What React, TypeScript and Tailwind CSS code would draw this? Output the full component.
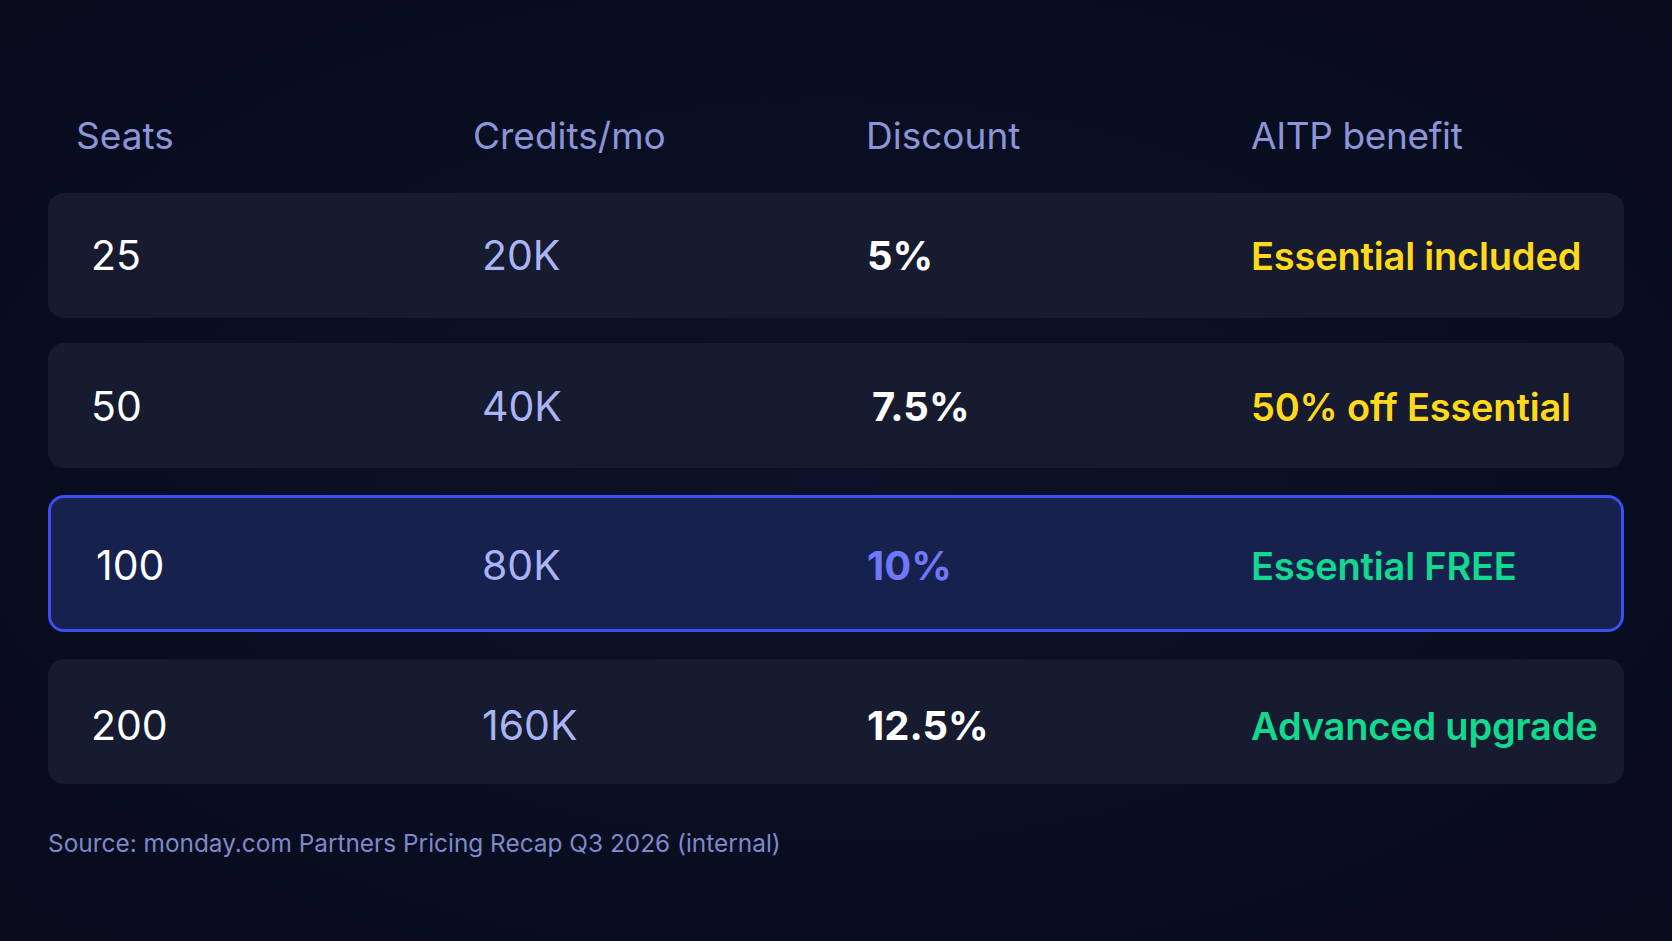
import React from "react";

type Row = {
  seats: string;
  credits: string;
  discount: string;
  discountPad?: string;
  rowPad?: string;
  benefit: string;
  benefitColor: string;
  highlight?: boolean;
};

const rows: Row[] = [
  { seats: "25", credits: "20K", discount: "5%", benefit: "Essential included", benefitColor: "text-[#ffd91a]" },
  { seats: "50", credits: "40K", discount: "7.5%", discountPad: "pl-[5px]", rowPad: "pt-[2px]", benefit: "50% off Essential", benefitColor: "text-[#ffd91a]" },
  { seats: "100", credits: "80K", discount: "10%", rowPad: "pt-[4px]", benefit: "Essential FREE", benefitColor: "text-[#12d98e]", highlight: true },
  { seats: "200", credits: "160K", discount: "12.5%", rowPad: "pt-[8px]", benefit: "Advanced upgrade", benefitColor: "text-[#12d98e]" },
];

export default function App() {
  return (
    <div
      className="w-[1672px] h-[941px] overflow-hidden bg-[#0a0e22] bg-[radial-gradient(ellipse_at_center,#0d1228_0%,#090d20_70%,#080b1c_100%)] px-[48px] pt-[108px]"
      style={{ fontFamily: "Inter, 'Noto Sans', sans-serif" }}
    >
      <div className="grid grid-cols-[397px_393px_385px_1fr] pl-[28px] h-[46px] items-center text-[37px] font-normal text-[#8b95d8]">
        <div>Seats</div>
        <div>Credits/mo</div>
        <div>Discount</div>
        <div className="tracking-[-0.01em]">AITP benefit</div>
      </div>
      <div className="mt-[39px] flex flex-col gap-[25px]">
        {rows.map((r) => (
          <div
            key={r.seats}
            className={`${
              r.highlight
                ? "grid grid-cols-[386px_385px_384px_1fr] items-center h-[137px] my-[2px] rounded-[16px] border-[3px] border-[#3d4ff2] bg-[#17214e] pl-[45px]"
                : "grid grid-cols-[391px_385px_384px_1fr] items-center h-[125px] rounded-[16px] bg-[#161b30] pl-[43px]"
            } ${r.rowPad ?? ""}`}
          >
            <div className="text-white font-normal text-[41px] leading-none">{r.seats}</div>
            <div className="text-[#a9b4f5] font-normal text-[41px] leading-none">{r.credits}</div>
            <div
              className={`${r.highlight ? "text-[#6f78f7]" : "text-white"} ${r.discountPad ?? ""} font-bold text-[40px] leading-none`}
            >
              {r.discount}
            </div>
            <div className={`${r.benefitColor} font-semibold text-[38px] leading-none tracking-[-0.005em]`}>
              {r.benefit}
            </div>
          </div>
        ))}
      </div>
      <div className="mt-[41px] text-[24.4px] text-[#7f89c9]">
        Source: monday.com Partners Pricing Recap Q3 2026 (internal)
      </div>
    </div>
  );
}
